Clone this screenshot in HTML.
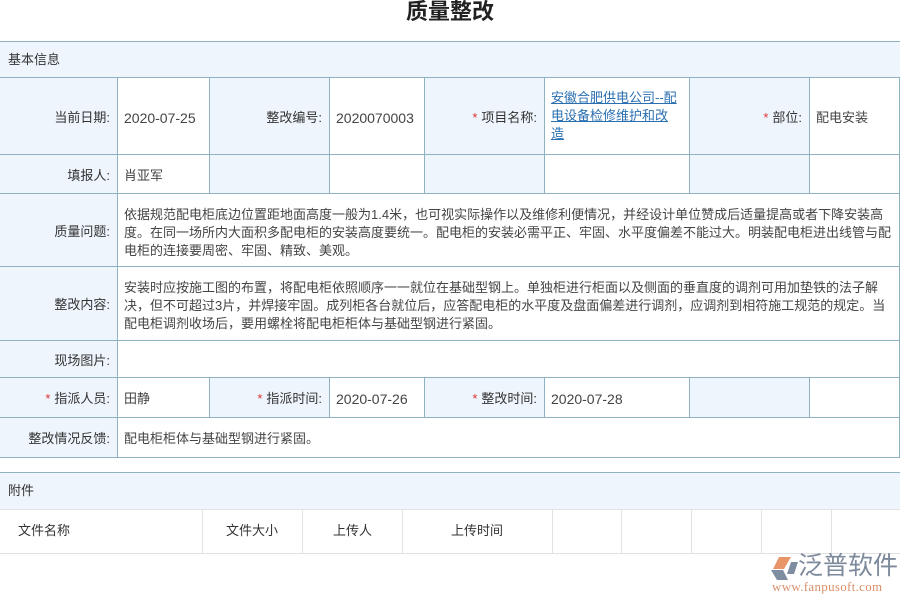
<!DOCTYPE html>
<html><head><meta charset="utf-8"><style>
*{margin:0;padding:0;box-sizing:border-box}
body{width:900px;height:600px;background:#fff;position:relative;overflow:hidden;font-family:"Liberation Sans","Noto Sans CJK SC",sans-serif;font-size:13px;color:#333}
.a{position:absolute}
.t{left:0;top:-2px;width:900px;text-align:center;font-size:22px;font-weight:bold;color:#222;line-height:28px}
.c{position:absolute;border-right:1px solid #8eb2c2;border-bottom:1px solid #8eb2c2;display:flex;align-items:center;line-height:18px}
.l{background:#eef5fd;justify-content:flex-end;padding-right:7px}
.v{background:#fff;padding-left:6px;color:#444}
.n{font-size:14px;padding-top:3px}
.s{color:#d33;margin-right:4px}
.lk{color:#2a6fb0;text-decoration:underline}
.g{position:absolute;border-right:1px solid #e2e2e2;height:44px;top:510px}
</style></head><body>
<div class="a t">质量整改</div>
<div class="a" style="left:0;top:41px;width:900px;height:37px;background:#eef5fd;border-top:1px solid #8eb2c2;border-bottom:1px solid #8eb2c2;padding-left:8px;line-height:35px">基本信息</div>

<div class="c l" style="left:0;top:78px;width:118px;height:77px;padding-top:3px">当前日期:</div>
<div class="c v n" style="left:118px;top:78px;width:92px;height:77px">2020-07-25</div>
<div class="c l" style="left:210px;top:78px;width:120px;height:77px;padding-top:3px">整改编号:</div>
<div class="c v n" style="left:330px;top:78px;width:95px;height:77px">2020070003</div>
<div class="c l" style="left:425px;top:78px;width:120px;height:77px;padding-top:3px"><span class="s">*</span>项目名称:</div>
<div class="c v" style="left:545px;top:78px;width:145px;height:77px"><span class="lk">安徽合肥供电公司--配<br>电设备检修维护和改<br>造</span></div>
<div class="c l" style="left:690px;top:78px;width:120px;height:77px;padding-top:3px"><span class="s">*</span>部位:</div>
<div class="c v" style="left:810px;top:78px;width:90px;height:77px;padding-top:3px">配电安装</div>

<div class="c l" style="left:0;top:155px;width:118px;height:39px;padding-top:3px">填报人:</div>
<div class="c v" style="left:118px;top:155px;width:92px;height:39px;padding-top:3px">肖亚军</div>
<div class="c l" style="left:210px;top:155px;width:120px;height:39px"></div>
<div class="c v" style="left:330px;top:155px;width:95px;height:39px"></div>
<div class="c l" style="left:425px;top:155px;width:120px;height:39px"></div>
<div class="c v" style="left:545px;top:155px;width:145px;height:39px"></div>
<div class="c l" style="left:690px;top:155px;width:120px;height:39px"></div>
<div class="c v" style="left:810px;top:155px;width:90px;height:39px"></div>

<div class="c l" style="left:0;top:194px;width:118px;height:73px;padding-top:3px">质量问题:</div>
<div class="c v" style="left:118px;top:194px;width:782px;height:73px;align-items:flex-start;padding-top:12px">依据规范配电柜底边位置距地面高度一般为1.4米，也可视实际操作以及维修利便情况，并经设计单位赞成后适量提高或者下降安装高<br>度。在同一场所内大面积多配电柜的安装高度要统一。配电柜的安装必需平正、牢固、水平度偏差不能过大。明装配电柜进出线管与配<br>电柜的连接要周密、牢固、精致、美观。</div>

<div class="c l" style="left:0;top:267px;width:118px;height:74px;padding-top:3px">整改内容:</div>
<div class="c v" style="left:118px;top:267px;width:782px;height:74px;align-items:flex-start;padding-top:12px">安装时应按施工图的布置，将配电柜依照顺序一一就位在基础型钢上。单独柜进行柜面以及侧面的垂直度的调剂可用加垫铁的法子解<br>决，但不可超过3片，并焊接牢固。成列柜各台就位后，应答配电柜的水平度及盘面偏差进行调剂，应调剂到相符施工规范的规定。当<br>配电柜调剂收场后，要用螺栓将配电柜柜体与基础型钢进行紧固。</div>

<div class="c l" style="left:0;top:341px;width:118px;height:37px;padding-top:3px">现场图片:</div>
<div class="c v" style="left:118px;top:341px;width:782px;height:37px"></div>

<div class="c l" style="left:0;top:378px;width:118px;height:40px;padding-top:3px"><span class="s">*</span>指派人员:</div>
<div class="c v" style="left:118px;top:378px;width:92px;height:40px;padding-top:3px">田静</div>
<div class="c l" style="left:210px;top:378px;width:120px;height:40px;padding-top:3px"><span class="s">*</span>指派时间:</div>
<div class="c v n" style="left:330px;top:378px;width:95px;height:40px">2020-07-26</div>
<div class="c l" style="left:425px;top:378px;width:120px;height:40px;padding-top:3px"><span class="s">*</span>整改时间:</div>
<div class="c v n" style="left:545px;top:378px;width:145px;height:40px">2020-07-28</div>
<div class="c l" style="left:690px;top:378px;width:120px;height:40px"></div>
<div class="c v" style="left:810px;top:378px;width:90px;height:40px"></div>

<div class="c l" style="left:0;top:418px;width:118px;height:40px;padding-top:3px">整改情况反馈:</div>
<div class="c v" style="left:118px;top:418px;width:782px;height:40px;padding-top:3px">配电柜柜体与基础型钢进行紧固。</div>

<div class="a" style="left:0;top:472px;width:900px;height:38px;background:#eef5fd;border-top:1px solid #8eb2c2;border-bottom:1px solid #e2e2e2;padding-left:8px;line-height:36px">附件</div>
<div class="a" style="left:0;top:510px;width:900px;height:44px;border-bottom:1px solid #e2e2e2"></div>
<div class="g" style="left:0;width:203px"></div>
<div class="g" style="left:203px;width:100px"></div>
<div class="g" style="left:303px;width:100px"></div>
<div class="g" style="left:403px;width:150px"></div>
<div class="g" style="left:553px;width:69px"></div>
<div class="g" style="left:622px;width:70px"></div>
<div class="g" style="left:692px;width:70px"></div>
<div class="g" style="left:762px;width:70px"></div>
<div class="a" style="left:18px;top:522px;line-height:18px">文件名称</div>
<div class="a" style="left:226px;top:522px;line-height:18px">文件大小</div>
<div class="a" style="left:333px;top:522px;line-height:18px">上传人</div>
<div class="a" style="left:451px;top:522px;line-height:18px">上传时间</div>

<svg class="a" style="left:769px;top:555px" width="30" height="26" viewBox="0 0 30 26">
<polygon points="10,2 22,2 15,14 4,14" fill="#e8956a"/>
<polygon points="2,15 14,15 19,25 8,25" fill="#7f8da0"/>
<polygon points="22,7 29,7 25,19 18,19" fill="#7f8da0"/>
</svg>
<div class="a" style="left:798px;top:550px;font-size:25px;line-height:32px;color:#7d8a9c;letter-spacing:0px">泛普软件</div>
<div class="a" style="left:772px;top:580px;font-family:'Liberation Serif',serif;font-size:13px;color:#d9906b;line-height:14px;letter-spacing:0.3px">www.fanpusoft.com</div>
</body></html>
